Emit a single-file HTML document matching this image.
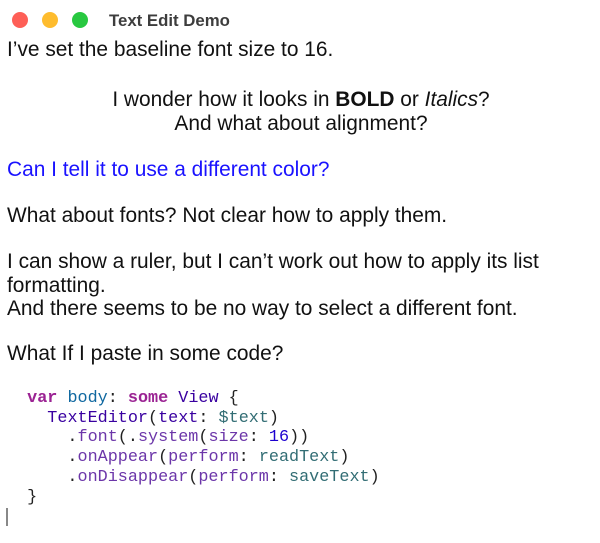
<!DOCTYPE html>
<html><head><meta charset="utf-8"><style>
body{margin:0;width:600px;height:543px;background:#fff;position:relative;overflow:hidden;font-family:"Liberation Sans",sans-serif;}
.c{position:absolute;top:12px;width:16px;height:16px;border-radius:50%;}
.t{position:absolute;left:0;font-size:20.9px;color:#111;white-space:nowrap;line-height:23px;}
.m{position:absolute;font-family:"Liberation Mono",monospace;font-size:16.8px;line-height:19.7px;white-space:pre;color:#222;}
.k{color:#9b2393;font-weight:bold}.b{color:#0f68a0}.p{color:#3900a0}.q{color:#6c36a9}.g{color:#326d74}.n{color:#1c00cf}
</style></head><body>
<div class="c" style="left:12px;background:#fe5f57"></div>
<div class="c" style="left:42px;background:#febc2e"></div>
<div class="c" style="left:72px;background:#28c840"></div>
<div style="position:absolute;left:109px;top:11px;font-size:16.8px;font-weight:bold;color:#3d3d3d">Text Edit Demo</div>
<div class="t" style="left:7px;top:38px">I’ve set the baseline font size to 16.</div>
<div class="t" style="width:602px;text-align:center;top:88px">I wonder how it looks in <b>BOLD</b> or <i>Italics</i>?</div>
<div class="t" style="width:602px;text-align:center;top:112px">And what about alignment?</div>
<div class="t" style="left:7px;top:158px;color:#1a12ff">Can I tell it to use a different color?</div>
<div class="t" style="left:7px;top:204px">What about fonts? Not clear how to apply them.</div>
<div class="t" style="left:7px;top:250px">I can show a ruler, but I can’t work out how to apply its list</div>
<div class="t" style="left:7px;top:274px">formatting.</div>
<div class="t" style="left:7px;top:297px">And there seems to be no way to select a different font.</div>
<div class="t" style="left:7px;top:342px">What If I paste in some code?</div>
<div class="m" style="left:7px;top:389px">  <span class="k">var</span> <span class="b">body</span>: <span class="k">some</span> <span class="p">View</span> {
    <span class="p">TextEditor</span>(<span class="p">text</span>: <span class="g">$text</span>)
      .<span class="q">font</span>(.<span class="q">system</span>(<span class="q">size</span>: <span class="n">16</span>))
      .<span class="q">onAppear</span>(<span class="q">perform</span>: <span class="g">readText</span>)
      .<span class="q">onDisappear</span>(<span class="q">perform</span>: <span class="g">saveText</span>)
  }</div>
<div style="position:absolute;left:6px;top:508px;width:1.5px;height:18px;background:#888"></div>
</body></html>
